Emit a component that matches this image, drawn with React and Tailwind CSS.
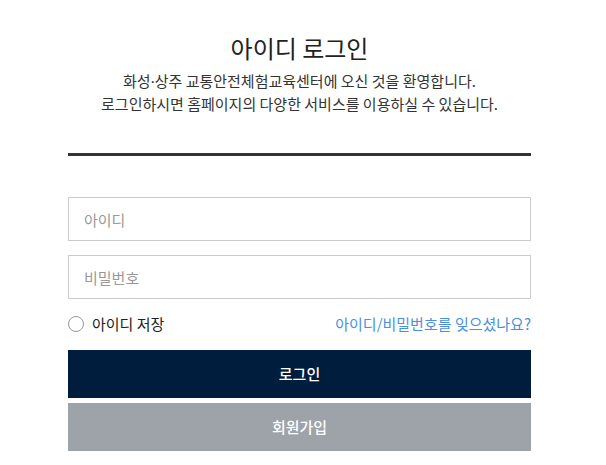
import { useState } from "react";

export default function App() {
  const [saveId, setSaveId] = useState(false);

  return (
    <div
      className="min-h-[465px] w-[606px] bg-white text-[#333]"
      style={{ fontFamily: '"Noto Sans CJK KR", "Noto Sans", sans-serif' }}
    >
      <div className="ml-[68px] w-[463px] pt-[31px]">
        {/* Heading */}
        <h1 className="text-center text-[24px] leading-[34px] font-normal text-[#222]">
          아이디 로그인
        </h1>
        <p className="mt-[4px] text-center text-[15px] leading-[23px] text-[#333]">
          화성<span className="leading-none" style={{ fontFamily: '"Noto Sans", sans-serif' }}>·</span>상주 교통안전체험교육센터에 오신 것을 환영합니다.
          <br />
          로그인하시면 홈페이지의 다양한 서비스를 이용하실 수 있습니다.
        </p>

        <div className="mt-[38px] h-[3px] bg-[#333]" />

        {/* Form */}
        <form className="mt-[41px] flex flex-col" onSubmit={(e) => e.preventDefault()}>
          <input
            type="text"
            placeholder="아이디"
            className="h-[44px] border border-[#ccc] px-[15px] text-[15px] text-[#333] placeholder:text-[#999] outline-none"
          />
          <input
            type="password"
            placeholder="비밀번호"
            className="mt-[14px] h-[44px] border border-[#ccc] px-[15px] text-[15px] text-[#333] placeholder:text-[#999] outline-none"
          />

          <div className="mt-[14px] flex h-[22px] items-center justify-between">
            <label className="flex cursor-pointer items-center gap-[8px] text-[15px] text-[#222]">
              <span
                onClick={() => setSaveId(!saveId)}
                className="flex h-[16px] w-[16px] items-center justify-center rounded-full border border-[#999] bg-white"
              >
                {saveId && <span className="h-[8px] w-[8px] rounded-full bg-[#001d3d]" />}
              </span>
              아이디 저장
            </label>
            <a href="#" className="text-[15px] text-[#4a90e2]">
              아이디/비밀번호를 잊으셨나요?
            </a>
          </div>

          <button
            type="submit"
            className="mt-[15px] h-[48px] bg-[#001d3d] text-[15px] font-medium text-white"
          >
            로그인
          </button>
          <button
            type="button"
            className="mt-[5px] h-[48px] bg-[#9ea3a9] text-[15px] font-medium text-white"
          >
            회원가입
          </button>
        </form>
      </div>
    </div>
  );
}
